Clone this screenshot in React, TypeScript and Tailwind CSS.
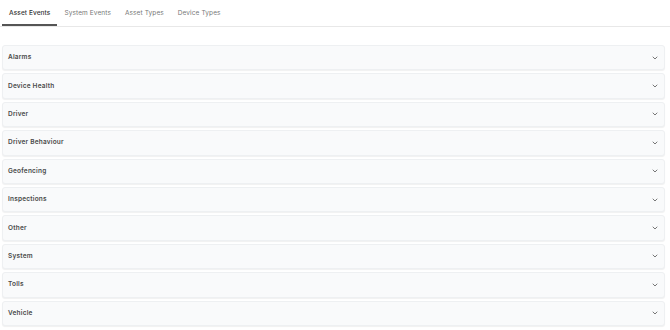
import { ChevronDown } from 'lucide-react'

const tabs = ['Asset Events', 'System Events', 'Asset Types', 'Device Types']

const groups = [
  'Alarms',
  'Device Health',
  'Driver',
  'Driver Behaviour',
  'Geofencing',
  'Inspections',
  'Other',
  'System',
  'Tolls',
  'Vehicle',
]

export default function App() {
  return (
    <div className="h-[330px] w-[670px] overflow-hidden bg-white font-['Inter',sans-serif]">
      {/* tab strip */}
      <div className="flex h-[27px] items-stretch border-b border-[#e8e8e8] pl-[2px]">
        {tabs.map((t, i) => (
          <div
            key={t}
            className={
              i === 0
                ? 'flex items-center border-b-[2px] border-[#555] px-[7px] pt-[4px] text-[6.5px] font-medium tracking-[0.1px] text-[#333]'
                : 'flex items-center border-b-[2px] border-transparent px-[7px] pt-[4px] text-[6.5px] tracking-[0.1px] text-[#777]'
            }
          >
            {t}
          </div>
        ))}
      </div>

      <div className="flex flex-col gap-[3px] pl-[2px] pr-[5px] pt-[18px]">
        {groups.map((g) => (
          <div
            key={g}
            className="flex h-[25.4px] items-center justify-between rounded-[3px] border border-[#eef0f2] bg-[#f9fafb] pl-[5px] pr-[5px] shadow-[0_1px_1px_rgba(0,0,0,0.06)]"
          >
            <span className="pt-[1px] text-[6.5px] font-semibold tracking-[0.2px] text-[#4a4a4a]">{g}</span>
            <ChevronDown className="h-[8px] w-[8px] text-[#555]" strokeWidth={2.4} />
          </div>
        ))}
      </div>
    </div>
  )
}
